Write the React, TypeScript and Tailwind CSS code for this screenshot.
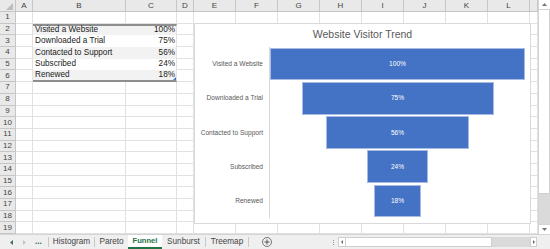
import React from "react";

const cols = ["A", "B", "C", "D", "E", "F", "G", "H", "I", "J", "K", "L", ""];

const tableRows = [
  ["Visited a Website", "100%"],
  ["Downloaded a Trial", "75%"],
  ["Contacted to Support", "56%"],
  ["Subscribed", "24%"],
  ["Renewed", "18%"],
];

const funnel = [
  { label: "Visited a Website", value: 100 },
  { label: "Downloaded a Trial", value: 75 },
  { label: "Contacted to Support", value: 56 },
  { label: "Subscribed", value: 24 },
  { label: "Renewed", value: 18 },
];

const Cell = ({ r, c }: { r: number; c: number }) => {
  const idx = r - 2;
  const inTable = idx >= 0 && idx < tableRows.length && (c === 1 || c === 2);
  if (!inTable) {
    return <div className="border-r border-b border-[#e1e1e1]" />;
  }
  const banded = idx % 2 === 0;
  const first = idx === 0;
  const last = idx === tableRows.length - 1;
  return (
    <div
      className={
        "relative flex items-center text-[8.2px] text-[#1a1a1a] leading-none " +
        (banded ? "bg-[#f2f2f2] " : "bg-white ") +
        (first ? "border-t-2 border-t-[#8e8e8e] " : "") +
        (last ? "border-b-2 border-b-[#8e8e8e] " : "") +
        (c === 1 ? "justify-start pl-[2px]" : "justify-end pr-[1px] border-r border-r-[#e1e1e1]")
      }
    >
      {tableRows[idx][c - 1]}
      {last && c === 2 && (
        <svg className="absolute right-0 bottom-0" width="3" height="3" viewBox="0 0 3 3">
          <polygon points="3,0 3,3 0,3" fill="#4472c4" />
        </svg>
      )}
    </div>
  );
};

const Chart = () => (
  <div className="absolute left-[194px] top-[23px] w-[337px] h-[201px] bg-white border border-[#d9d9d9] flex flex-col">
    <div className="h-[22px] flex items-center justify-center text-[10.5px] text-[#595959]">
      Website Visitor Trend
    </div>
    <div className="mt-[1px] flex">
      <div className="w-[74px] flex flex-col">
        {funnel.map((f) => (
          <div key={f.label} className="h-[34.2px] flex items-center justify-end pr-[6px] text-[6.6px] text-[#595959] whitespace-nowrap">
            {f.label}
          </div>
        ))}
      </div>
      <div className="w-[256px] border-l border-[#d9d9d9] flex flex-col">
        {funnel.map((f) => (
          <div key={f.label} className="h-[34.2px] flex items-center justify-center">
            <div
              className="h-[32.6px] bg-[#4472c4] border border-[#a7bbe3] flex items-center justify-center text-[6.6px] text-white"
              style={{ width: `${(f.value / 100) * 256}px` }}
            >
              {f.value}%
            </div>
          </div>
        ))}
      </div>
    </div>
  </div>
);

const VScroll = () => (
  <div className="w-[12px] h-[234px] flex flex-col bg-[#e3e3e3] border-l border-[#d4d4d4]">
    <div className="h-[10px] bg-white border-b border-[#d4d4d4] flex items-center justify-center">
      <svg width="5" height="3" viewBox="0 0 5 3">
        <polygon points="2.5,0 5,3 0,3" fill="#777" />
      </svg>
    </div>
    <div className="h-[184px] bg-white border-r border-b border-[#cfcfcf]" />
    <div className="flex-1 bg-[#dadada]" />
    <div className="h-[10px] bg-white border-t border-[#d4d4d4] flex items-center justify-center">
      <svg width="5" height="3" viewBox="0 0 5 3">
        <polygon points="0,0 5,0 2.5,3" fill="#777" />
      </svg>
    </div>
  </div>
);

const Tabs = () => (
  <div className="h-[15px] flex items-stretch bg-[#efefef] border-t border-[#d4d4d4] text-[8.2px] text-[#444] leading-none">
    <div className="w-[48px] flex items-center">
      <svg className="ml-[10px]" width="3" height="5" viewBox="0 0 3 5">
        <polygon points="3,0 3,5 0,2.5" fill="#4a6b55" />
      </svg>
      <svg className="ml-[10px]" width="3" height="5" viewBox="0 0 3 5">
        <polygon points="0,0 3,2.5 0,5" fill="#c4c4c4" />
      </svg>
      <span className="ml-[9px] text-[#3d6b4d] font-bold">...</span>
    </div>
    <div className="w-px bg-[#c8c8c8] my-[2px]" />
    <div className="w-[45px] flex items-center justify-center">Histogram</div>
    <div className="w-px bg-[#c8c8c8] my-[2px]" />
    <div className="w-[33px] flex items-center justify-center">Pareto</div>
    <div className="w-[34px] bg-white border-b-2 border-[#217346] flex items-center justify-center text-[7.6px] font-bold text-[#217346]">
      Funnel
    </div>
    <div className="w-[43px] flex items-center justify-center">Sunburst</div>
    <div className="w-px bg-[#c8c8c8] my-[2px]" />
    <div className="w-[42px] flex items-center justify-center">Treemap</div>
    <div className="w-px bg-[#c8c8c8] my-[2px]" />
    <div className="w-[80px] flex items-center">
      <div className="ml-[13px] w-[10px] h-[10px] rounded-full border border-[#777] flex items-center justify-center text-[9px] text-[#555]">
        <svg width="6" height="6" viewBox="0 0 6 6">
          <path d="M3 0.5V5.5M0.5 3H5.5" stroke="#555" strokeWidth="1" />
        </svg>
      </div>
    </div>
    <div className="w-[9px] flex flex-col items-center justify-center gap-[1px]">
      <span className="w-px h-px bg-[#999]" />
      <span className="w-px h-px bg-[#999]" />
      <span className="w-px h-px bg-[#999]" />
    </div>
    <div className="w-[8px] my-[2px] bg-white border border-[#cfcfcf] flex items-center justify-center">
      <svg width="2" height="4" viewBox="0 0 2 4">
        <polygon points="2,0 2,4 0,2" fill="#666" />
      </svg>
    </div>
    <div className="w-[146px] my-[2px] bg-white border-y border-r border-[#cfcfcf]" />
    <div className="w-[38px] my-[2px] bg-[#dadada]" />
    <div className="w-[7px] my-[2px] bg-white border border-[#cfcfcf] flex items-center justify-center">
      <svg width="2" height="4" viewBox="0 0 2 4">
        <polygon points="0,0 2,2 0,4" fill="#666" />
      </svg>
    </div>
    <div className="flex-1" />
  </div>
);

const App = () => {
  return (
    <div className="w-[550px] h-[249px] overflow-hidden bg-white flex flex-col font-['Liberation_Sans',Arial,sans-serif]">
      <div className="h-[234px] flex overflow-hidden">
        <div className="relative w-[538px] h-[234px] overflow-hidden">
          <div className="grid grid-cols-[16px_17px_93px_51px_17px_repeat(8,42px)_8px] grid-rows-[12px_repeat(19,11.7px)]">
            <div className="bg-[#e9e9e9] border-r border-b border-[#c6c6c6] flex items-end justify-end pr-[2px] pb-[1px]">
              <svg width="7" height="7" viewBox="0 0 7 7">
                <polygon points="7,0 7,7 0,7" fill="#bdbdbd" />
              </svg>
            </div>
            {cols.map((c, i) => (
              <div
                key={"h" + i}
                className="bg-[#e9e9e9] border-r border-b border-[#c6c6c6] flex items-center justify-center text-[8px] text-[#444]"
              >
                {c}
              </div>
            ))}
            {Array.from({ length: 19 }, (_, ri) => {
              const r = ri + 1;
              return (
                <React.Fragment key={"r" + r}>
                  <div className="bg-[#e9e9e9] border-r border-b border-[#c6c6c6] flex items-center justify-center text-[8px] text-[#444]">
                    {r}
                  </div>
                  {cols.map((_, ci) => (
                    <Cell key={"c" + r + "-" + ci} r={r} c={ci} />
                  ))}
                </React.Fragment>
              );
            })}
          </div>
          <Chart />
        </div>
        <VScroll />
      </div>
      <Tabs />
    </div>
  );
};

export default App;
